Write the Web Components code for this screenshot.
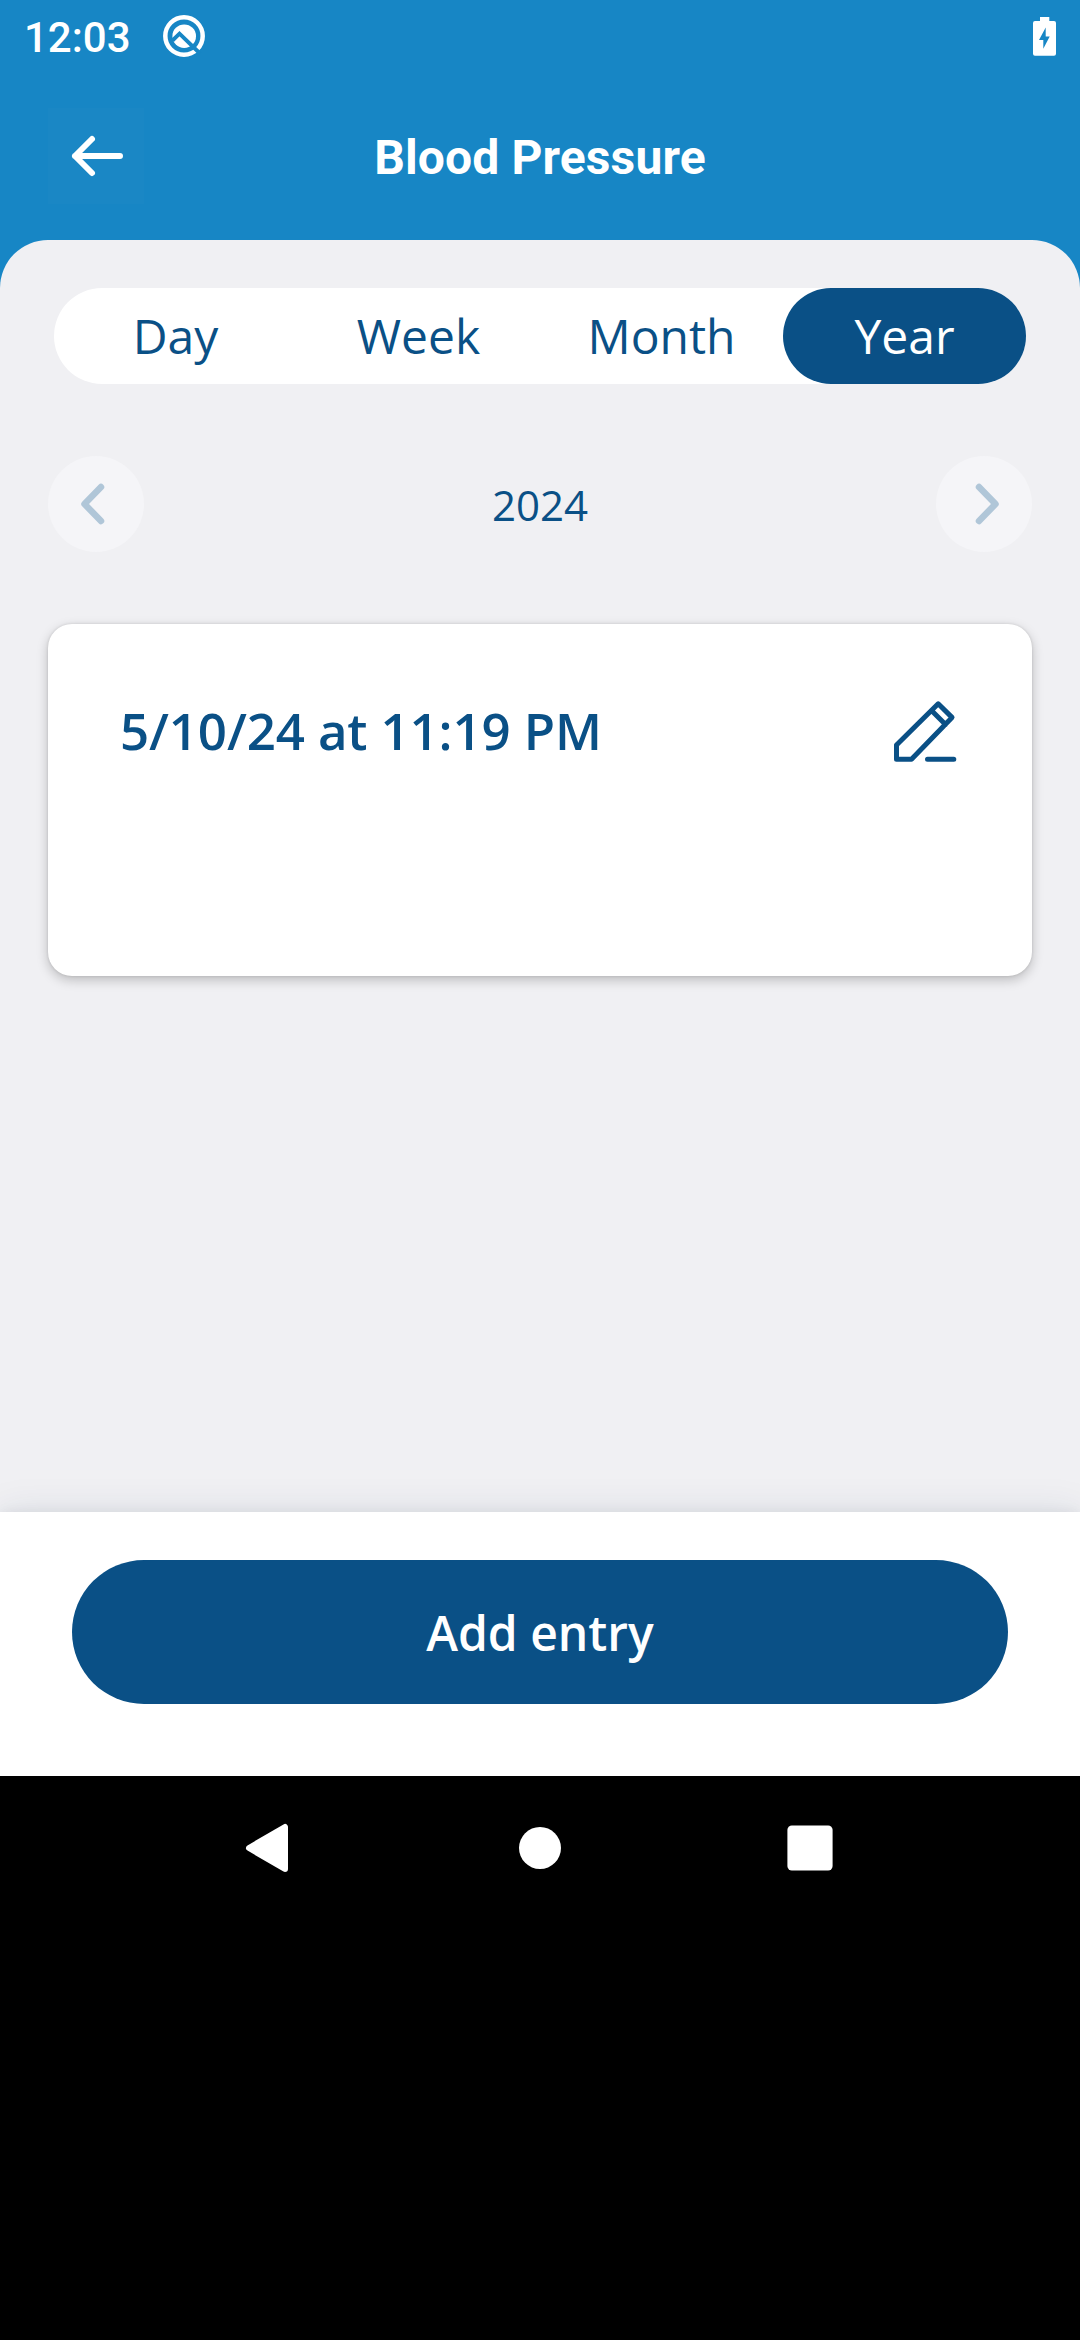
<!DOCTYPE html>
<html lang="en">
<head>
<meta charset="utf-8">
<title>Blood Pressure</title>
<style>
  html, body { margin: 0; background: #000; }
</style>
</head>
<body>
<health-app></health-app>
<script>
  function define(name, html) {
    const template = document.createElement('template');
    template.innerHTML = html;
    customElements.define(name, class extends HTMLElement {
      constructor() {
        super();
        this.attachShadow({ mode: 'open' }).append(template.content.cloneNode(true));
      }
    });
  }

  define('status-bar', `
    <style>
      :host { display: flex; align-items: center; height: 72px; padding: 0 24px; box-sizing: border-box;
              font: 500 42px/72px Roboto, sans-serif; color: #fff; }
      .time { padding-top: 3px; }
      .logo { width: 44px; height: 44px; margin-left: 31.5px; }
      .battery { width: 23px; height: 39px; margin-left: auto; }
      svg { display: block; }
    </style>
    <span class="time"><slot></slot></span>
    <svg class="logo" viewBox="0 0 44 44">
      <circle cx="22" cy="22" r="18.7" fill="none" stroke="#fff" stroke-width="4.5"/>
      <circle cx="22.2" cy="22.2" r="11.8" fill="#fff"/>
      <path d="M10.5 26.5 17.5 19.7 38 39.5" fill="none" stroke="#1786c5" stroke-width="3.9"/>
    </svg>
    <svg class="battery" viewBox="0 0 23 39">
      <path fill="#fff" fill-rule="evenodd" d="M7 0h9.3v4H21a2 2 0 0 1 2 2v30.700a2 2 0 0 1-2 2H2a2 2 0 0 1-2-2V6a2 2 0 0 1 2-2h5zM12.700 10.500 6 23h4.300v8.700L16.700 19.600h-4z"/>
    </svg>`);

  define('app-header', `
    <style>
      :host { display: grid; grid-template-columns: 96px 1fr 96px; align-items: center; height: 168px;
              padding: 0 48px; color: #fff; font: 700 48px/96px Roboto, sans-serif; letter-spacing: .12px; }
      button { display: block; width: 96px; height: 96px; padding: 0; border: 0; background: #1a87c5; }
      svg { display: block; }
      .title { text-align: center; padding-top: 3px; }
    </style>
    <button aria-label="Back"><svg width="96" height="96" viewBox="0 0 96 96" fill="none" stroke="#fff" stroke-width="6" stroke-linecap="round" stroke-linejoin="round"><path d="M72 48H27M44 31 27 48 44 65"/></svg></button>
    <div class="title"><slot></slot></div>`);

  define('range-tab', `
    <style>
      :host { flex: 1; display: block; height: 96px; border-radius: 48px; text-align: center;
              font: 400 48px/96px "Open Sans", sans-serif; color: #0a5086; }
      :host([selected]) { background: #0a5086; color: #fff; }
    </style>
    <slot></slot>`);

  define('range-tabs', `
    <style>
      :host { display: flex; margin: 0 54px; border-radius: 48px; background: #fff; }
    </style>
    <slot></slot>`);

  define('chevron-button', `
    <style>
      :host { display: block; width: 96px; height: 96px; border-radius: 50%; background: #f5f5f8; }
      :host([direction="next"]) svg { transform: scaleX(-1); }
      svg { display: block; }
    </style>
    <svg width="96" height="96" viewBox="0 0 96 96" fill="none" stroke="#b0c6d8" stroke-width="6.500" stroke-linecap="round" stroke-linejoin="round"><path d="M53 31 36.500 48 53 65"/></svg>`);

  define('period-nav', `
    <style>
      :host { display: flex; justify-content: space-between; align-items: center; height: 96px; margin: 72px 48px;
              font: 400 42px/94px "Open Sans", sans-serif; color: #0a5086; }
      span { padding-top: 2px; }
    </style>
    <chevron-button direction="previous"></chevron-button>
    <span><slot></slot></span>
    <chevron-button direction="next"></chevron-button>`);

  define('entry-card', `
    <style>
      :host { display: flex; justify-content: space-between; align-items: flex-start; box-sizing: border-box;
              height: 352px; margin: 0 48px; padding: 72px; border-radius: 24px; background: #fff;
              box-shadow: 0 0 3px rgba(0,0,0,.12), 0 4px 12px rgba(0,0,0,.22);
              font: 600 51px/69px "Open Sans", sans-serif; letter-spacing: -.12px; color: #0a5086; }
      svg { display: block; }
    </style>
    <span><slot></slot></span>
    <svg width="72" height="72" viewBox="0 0 72 72" fill="none" stroke="#0a5086" stroke-width="5" stroke-linecap="round" stroke-linejoin="round">
      <path d="M8.500 49 50.200 7.800 64 21.400 23.500 63.300H8.500ZM43.500 14.500 57.500 28.500M39.500 63.300H65.800"/>
    </svg>`);

  define('action-footer', `
    <style>
      :host { display: block; padding: 48px 72px 72px; background: #fff;
              box-shadow: 0 0 36px rgba(10,50,90,.1), 0 0 12px rgba(0,0,0,.06); }
      button { display: block; width: 100%; height: 144px; padding: 2px 0 0; border: 0; border-radius: 72px;
               background: #0a5086; color: #fff; font: 600 48px/142px "Open Sans", sans-serif; }
    </style>
    <button><slot></slot></button>`);

  define('system-nav', `
    <style>
      :host { display: flex; justify-content: center; gap: 174px; padding-top: 24px; height: 540px; background: #000; }
      svg { display: block; }
    </style>
    <svg width="96" height="96" viewBox="0 0 96 96"><path fill="#fff" stroke="#fff" stroke-width="6" stroke-linejoin="round" d="M63 27V69L27 48Z"/></svg>
    <svg width="96" height="96" viewBox="0 0 96 96"><circle cx="48" cy="48" r="21" fill="#fff"/></svg>
    <svg width="96" height="96" viewBox="0 0 96 96"><rect x="25.400" y="25.400" width="45.200" height="45.200" rx="4.500" fill="#fff"/></svg>`);

  define('health-app', `
    <style>
      :host { display: flex; flex-direction: column; width: 1080px; height: 2340px; overflow: hidden;
              background: linear-gradient(#1786c5 1000px, #fff 1000px, #fff 1776px, #000 1776px); }
      main { flex: 1; padding-top: 48px; box-sizing: border-box; border-radius: 48px 48px 0 0; background: #f0f0f3; }
      system-nav { box-sizing: content-box; }
    </style>
    <status-bar>12:03</status-bar>
    <app-header>Blood Pressure</app-header>
    <main>
      <range-tabs>
        <range-tab>Day</range-tab><range-tab>Week</range-tab><range-tab>Month</range-tab><range-tab selected>Year</range-tab>
      </range-tabs>
      <period-nav>2024</period-nav>
      <entry-card>5/10/24 at 11:19 PM</entry-card>
    </main>
    <action-footer>Add entry</action-footer>
    <system-nav></system-nav>`);
</script>
</body>
</html>
